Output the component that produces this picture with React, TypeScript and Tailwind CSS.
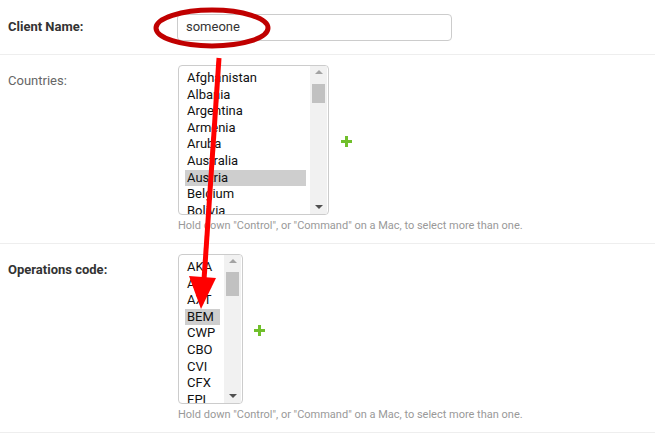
import React from "react"

const countries = ["Afghanistan", "Albania", "Argentina", "Armenia", "Aruba", "Australia", "Austria", "Belgium", "Bolivia"]
const opCodes = ["AKA", "AVR", "AXT", "BEM", "CWP", "CBO", "CVI", "CFX", "EPI"]

interface ListProps {
    readonly items: string[]
    readonly selected: string
    readonly width: string
    readonly thumbTop: string
    readonly thumbHeight: string
}

function MultiSelect({ items, selected, width, thumbTop, thumbHeight }: ListProps) {
    return (
        <div className={`flex h-[150px] ${width} border border-[#ccc] rounded-[4px] overflow-hidden bg-white`}>
            <div className="flex-1 pl-[6px] pr-[4px] pt-[4px] overflow-hidden">
                {items.map((item) => (
                    <div
                        key={item}
                        className={`h-[16.6px] leading-[16.6px] px-[2px] text-[13px] text-[#111] whitespace-nowrap ${item === selected ? "bg-[#cecece]" : ""}`}
                    >
                        {item}
                    </div>
                ))}
            </div>
            <div className="relative w-[17px] bg-[#f1f1f1] mr-[1px]">
                <div className="absolute top-[4px] left-0 right-0 flex justify-center">
                    <div className="w-0 h-0 border-l-[4px] border-r-[4px] border-b-[4px] border-l-transparent border-r-transparent border-b-[#a3a3a3]" />
                </div>
                <div className={`absolute left-[2px] right-[2px] bg-[#c1c1c1] ${thumbTop} ${thumbHeight}`} />
                <div className="absolute bottom-[5px] left-0 right-0 flex justify-center">
                    <div className="w-0 h-0 border-l-[4px] border-r-[4px] border-t-[4px] border-l-transparent border-r-transparent border-t-[#505050]" />
                </div>
            </div>
        </div>
    )
}

function AddLink() {
    return (
        <svg width="11" height="11" viewBox="0 0 11 11">
            <rect x="4" y="0" width="3" height="11" fill="#70bf2b" />
            <rect x="0" y="4" width="11" height="3" fill="#70bf2b" />
        </svg>
    )
}

function HelpText() {
    return (
        <p className="mt-[4px] text-[11px] leading-[14px] text-[#999]">
            Hold down "Control", or "Command" on a Mac, to select more than one.
        </p>
    )
}

export default function App() {
    return (
        <div className="relative w-[655px] h-[442px] bg-white font-['Roboto',sans-serif] overflow-hidden">
            <div className="flex items-center h-[55px] px-2 border-b border-[#eee]">
                <label className="w-[169px] text-[13px] font-bold text-[#333]">Client Name:</label>
                <div className="w-[275px] h-[27px] border border-[#ccc] rounded-[4px] px-[8px] flex items-center text-[13px] text-[#333]">
                    someone
                </div>
            </div>

            <div className="flex px-2 pt-[10px] pb-[10px] border-b border-[#eee]">
                <label className="w-[170px] pt-[6px] text-[13px] text-[#666]">Countries:</label>
                <div>
                    <div className="flex items-center">
                        <MultiSelect items={countries} selected="Austria" width="w-[151px]" thumbTop="top-[18px]" thumbHeight="h-[19px]" />
                        <div className="ml-[12px] mt-[2px] flex">
                            <AddLink />
                        </div>
                    </div>
                    <HelpText />
                </div>
            </div>

            <div className="flex px-2 pt-[10px] pb-[10px] border-b border-[#eee]">
                <label className="w-[170px] pt-[6px] text-[13px] font-bold text-[#333]">Operations code:</label>
                <div>
                    <div className="flex items-center">
                        <MultiSelect items={opCodes} selected="BEM" width="w-[65px]" thumbTop="top-[17px]" thumbHeight="h-[24px]" />
                        <div className="ml-[11px] mt-[2px] flex">
                            <AddLink />
                        </div>
                    </div>
                    <HelpText />
                </div>
            </div>

            {/* red markup drawn over the form */}
            <svg className="absolute inset-0 pointer-events-none" width="655" height="442" viewBox="0 0 655 442">
                <ellipse cx="212" cy="28" rx="56" ry="18" fill="none" stroke="#c00000" strokeWidth="5" />
                <line x1="219" y1="58" x2="204" y2="280" stroke="#ff0000" strokeWidth="5" />
                <polygon points="189,276 216,278 201,309" fill="#ff0000" />
            </svg>
        </div>
    )
}
